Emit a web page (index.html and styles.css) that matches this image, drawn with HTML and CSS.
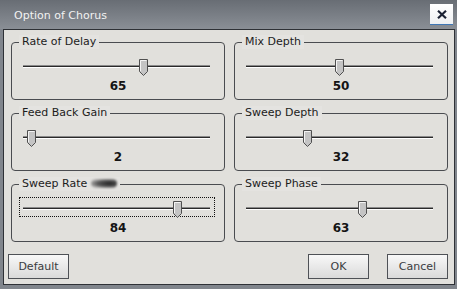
FILE: index.html
```html
<!DOCTYPE html>
<html>
<head>
<meta charset="utf-8">
<link rel="stylesheet" href="styles.css">
</head>
<body>
<div class="window">
  <div class="titlebar">
    <span class="title">Option of Chorus</span>
    <button class="close" aria-label="Close">
      <svg width="10" height="9" viewBox="0 0 10 9"><path d="M1 0.8 L9 8.2 M9 0.8 L1 8.2" stroke="#1b2233" stroke-width="2.2" fill="none"/></svg>
    </button>
  </div>
  <div class="client">
    <div class="groups">
      <fieldset class="group">
        <legend>Rate of Delay</legend>
        <div class="slider"><div class="track"></div><div class="thumb" style="--v:65"><svg width="9" height="17" viewBox="0 0 9 17"><polygon points="0.5,0.5 8.5,0.5 8.5,12.5 4.5,16.5 0.5,12.5" fill="#c4c4c4" stroke="#505050"/><polyline points="1.5,12 1.5,1.5 7.5,1.5" fill="none" stroke="#f4f4f4"/></svg></div></div>
        <div class="value">65</div>
      </fieldset>
      <fieldset class="group">
        <legend>Mix Depth</legend>
        <div class="slider"><div class="track"></div><div class="thumb" style="--v:50"><svg width="9" height="17" viewBox="0 0 9 17"><polygon points="0.5,0.5 8.5,0.5 8.5,12.5 4.5,16.5 0.5,12.5" fill="#c4c4c4" stroke="#505050"/><polyline points="1.5,12 1.5,1.5 7.5,1.5" fill="none" stroke="#f4f4f4"/></svg></div></div>
        <div class="value">50</div>
      </fieldset>
      <fieldset class="group">
        <legend>Feed Back Gain</legend>
        <div class="slider"><div class="track"></div><div class="thumb" style="--v:2"><svg width="9" height="17" viewBox="0 0 9 17"><polygon points="0.5,0.5 8.5,0.5 8.5,12.5 4.5,16.5 0.5,12.5" fill="#c4c4c4" stroke="#505050"/><polyline points="1.5,12 1.5,1.5 7.5,1.5" fill="none" stroke="#f4f4f4"/></svg></div></div>
        <div class="value">2</div>
      </fieldset>
      <fieldset class="group">
        <legend>Sweep Depth</legend>
        <div class="slider"><div class="track"></div><div class="thumb" style="--v:32"><svg width="9" height="17" viewBox="0 0 9 17"><polygon points="0.5,0.5 8.5,0.5 8.5,12.5 4.5,16.5 0.5,12.5" fill="#c4c4c4" stroke="#505050"/><polyline points="1.5,12 1.5,1.5 7.5,1.5" fill="none" stroke="#f4f4f4"/></svg></div></div>
        <div class="value">32</div>
      </fieldset>
      <fieldset class="group">
        <legend>Sweep Rate<span class="blot"></span></legend>
        <div class="slider focused"><div class="track"></div><div class="thumb" style="--v:84"><svg width="9" height="17" viewBox="0 0 9 17"><polygon points="0.5,0.5 8.5,0.5 8.5,12.5 4.5,16.5 0.5,12.5" fill="#c4c4c4" stroke="#505050"/><polyline points="1.5,12 1.5,1.5 7.5,1.5" fill="none" stroke="#f4f4f4"/></svg></div></div>
        <div class="value">84</div>
      </fieldset>
      <fieldset class="group">
        <legend>Sweep Phase</legend>
        <div class="slider"><div class="track"></div><div class="thumb" style="--v:63"><svg width="9" height="17" viewBox="0 0 9 17"><polygon points="0.5,0.5 8.5,0.5 8.5,12.5 4.5,16.5 0.5,12.5" fill="#c4c4c4" stroke="#505050"/><polyline points="1.5,12 1.5,1.5 7.5,1.5" fill="none" stroke="#f4f4f4"/></svg></div></div>
        <div class="value">63</div>
      </fieldset>
    </div>
    <div class="buttons">
      <button class="btn">Default</button>
      <span class="spacer"></span>
      <button class="btn">OK</button>
      <button class="btn">Cancel</button>
    </div>
  </div>
</div>
</body>
</html>
```
FILE: styles.css
```css
html, body {
  margin: 0;
  padding: 0;
}
body {
  width: 457px;
  height: 289px;
  overflow: hidden;
  font-family: "DejaVu Sans", sans-serif;
  font-size: 11px;
}
.window {
  width: 457px;
  height: 289px;
  box-sizing: border-box;
  background: #80858c;
  display: flex;
  flex-direction: column;
}
.titlebar {
  height: 29px;
  flex: none;
  display: flex;
  align-items: flex-start;
  background: linear-gradient(#686d74, #8a8f96);
}
.title {
  color: #f2f2f2;
  margin: 9px 0 0 14px;
  line-height: 13px;
  flex: 1;
}
.close {
  margin: 4px 4px 0 0;
  width: 23px;
  height: 21px;
  padding: 0;
  border: none;
  border-bottom: 1px solid #3f77b5;
  background: linear-gradient(#ffffff, #eef0f2);
  display: flex;
  align-items: center;
  justify-content: center;
}
.close svg {
  display: block;
}
.client {
  margin: 0 2px 4px 3px;
  border: 1px solid #2e3136;
  background: #e1e0dc;
  padding: 5px 6px 5px 4px;
  flex: 1;
  display: flex;
  flex-direction: column;
}
.groups {
  display: grid;
  grid-template-columns: 214px 214px;
  column-gap: 9px;
  row-gap: 6px;
  padding-left: 3px;
}
.group {
  margin: 0;
  padding: 0 0 6px 0;
  min-width: 0;
  border: 1px solid #4a4c50;
  border-radius: 4px;
}
.group legend {
  margin-left: 7px;
  padding: 0 3px;
  line-height: 14px;
  color: #1c1c1c;
  background: #e4e3e0;
}
.blot {
  display: inline-block;
  width: 26px;
  height: 9px;
  margin-left: 4px;
  vertical-align: -1px;
  border-radius: 5px;
  background: radial-gradient(ellipse at 70% 50%, #222 0%, #555 45%, rgba(120,120,120,0.4) 80%, rgba(200,200,200,0) 100%);
  filter: blur(1.2px);
}
.slider {
  position: relative;
  width: 196px;
  height: 20px;
  margin: 6px 0 0 7px;
  padding: 0 5px 0 4px;
  box-sizing: border-box;
}
.slider.focused {
  outline: 1px dotted #111;
  outline-offset: -1px;
}
.track {
  position: relative;
  top: 10px;
  height: 3px;
  background: linear-gradient(#8a8a8a 0 1px, #2a2a2a 1px 2px, #ffffff 2px 3px);
}
.thumb {
  position: absolute;
  top: 4px;
  left: calc(4px + (187px - 9px) * var(--v) / 100);
  width: 9px;
  height: 17px;
}
.thumb svg {
  display: block;
}
.value {
  margin-top: 4px;
  line-height: 14px;
  text-align: center;
  font-weight: bold;
  font-size: 12px;
  color: #141414;
}
.buttons {
  margin-top: 12px;
  display: flex;
  gap: 18px;
}
.spacer {
  flex: 1;
}
.btn {
  width: 61px;
  height: 25px;
  padding: 0;
  border: 1px solid #4e5156;
  background: linear-gradient(#f8f8f8, #dadada);
  font-family: "DejaVu Sans", sans-serif;
  font-size: 11px;
  color: #3a3c40;
}
.btn:first-child {
  margin-right: -18px;
}
```
